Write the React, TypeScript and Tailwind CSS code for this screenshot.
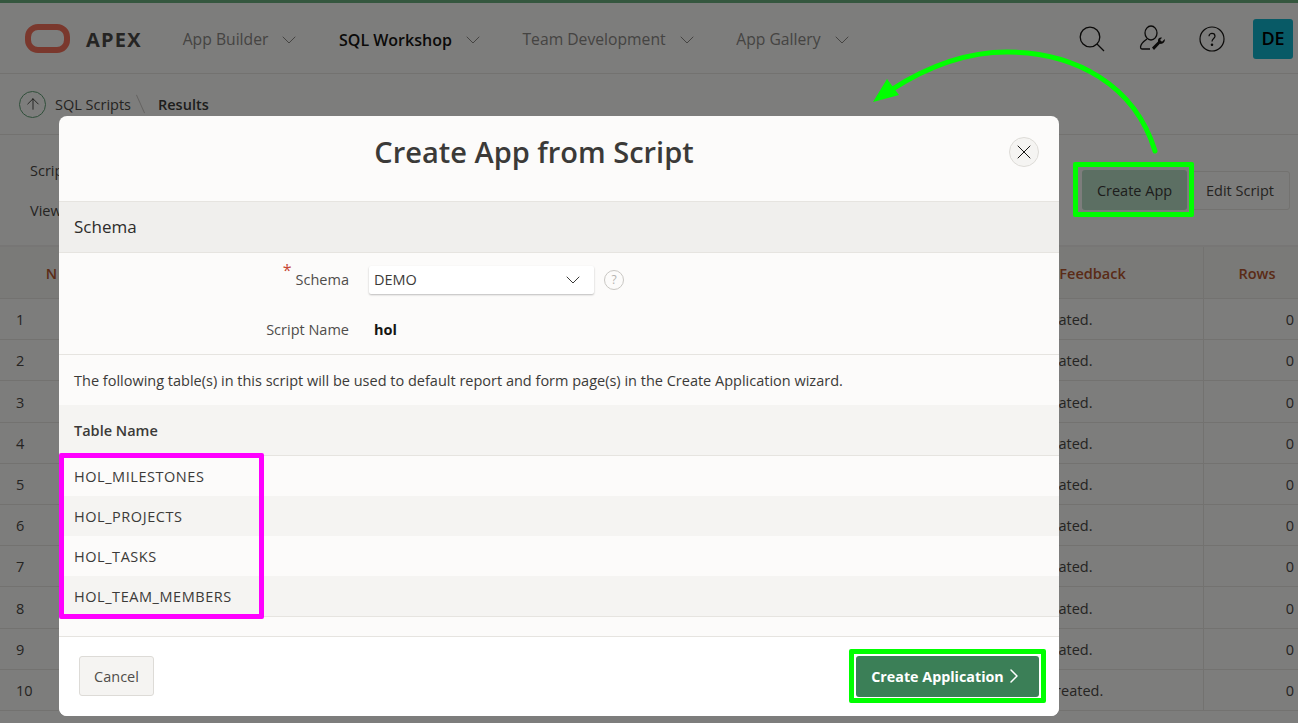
import React from "react";
import { ChevronDown, ChevronRight, X, ArrowUp } from "lucide-react";

const navItems = [
  { label: "App Builder", active: false },
  { label: "SQL Workshop", active: true },
  { label: "Team Development", active: false },
  { label: "App Gallery", active: false },
];

const scriptRows = [1, 2, 3, 4, 5, 6, 7, 8, 9, 10];
const tableNames = ["HOL_MILESTONES", "HOL_PROJECTS", "HOL_TASKS", "HOL_TEAM_MEMBERS"];

const UserWrench = () => (
  <svg width="27" height="27" viewBox="0 0 27 27" fill="none" stroke="currentColor" strokeWidth="1.3">
    <ellipse cx="12" cy="8" rx="6" ry="7" />
    <path d="M8 14 C5 16 2 18 1.5 22 Q1.500 24 3 24 H11" />
    <path d="M13 22.500 L19 16.500 C18.500 13.500 21 12 23 12.800 L21 15 L23 16.800 L25.800 14 C26.300 17 23.500 19.500 20.800 18.800 L15 25 Z" fill="currentColor" stroke="none" />
  </svg>
);

const App = () => {
  return (
    <div className="relative h-[723px] w-[1298px] overflow-hidden bg-[#fbfaf8] font-['Open_Sans',sans-serif] text-[14.5px] text-[#3b3a38]">
      {/* page behind the dialog */}
      <div className="h-[3px] bg-[#6aae7e]" />
      <header className="flex h-[71px] items-center border-b border-[#e6e4e0] pl-[25px] pr-[5px] pt-[1px]">
        <div className="h-[29px] w-[45px] rounded-[13px] border-[6px] border-[#f5705a]" />
        <span className="ml-[16px] pt-[2px] text-[20px] font-bold tracking-[1.2px] text-[#4a4946]">APEX</span>
        <nav className="ml-[41px] flex items-center gap-[37.6px] pt-[2px] text-[15.7px]">
          {navItems.map((item) => (
            <div key={item.label} className="flex items-center gap-[9px]">
              <span className={item.active ? "text-[16px] font-semibold text-[#161513]" : "text-[#8a8885]"}>{item.label}</span>
              <ChevronDown size={24} strokeWidth={1} className="text-[#8a8885]" />
            </div>
          ))}
        </nav>
        <div className="ml-auto flex items-center text-[#161513]">
          <svg width="26" height="26" viewBox="0 0 26 26" fill="none" stroke="currentColor" strokeWidth="1.3">
            <circle cx="11" cy="11" r="9.800" />
            <path d="M18 18 L25 25" />
          </svg>
          <span className="ml-[34px]"><UserWrench /></span>
          <svg className="ml-[33px]" width="26" height="26" viewBox="0 0 26 26" fill="none" stroke="currentColor" strokeWidth="1.2">
            <circle cx="13" cy="13" r="12" />
            <path d="M10 10.200 C10 6.500 16 6.500 16 10.200 C16 12.500 13 12.500 13 15.500" />
            <circle cx="13" cy="18.800" r="0.7" fill="currentColor" />
          </svg>
          <div className="ml-[28px] flex h-[40px] w-[40px] items-center justify-center rounded-[3px] bg-[#11b4cc] text-[18px] font-semibold text-black">DE</div>
        </div>
      </header>
      <div className="flex h-[61px] items-center border-b border-[#e6e4e0] pl-[19px]">
        <div className="flex h-[27px] w-[27px] items-center justify-center rounded-full border border-[#5f9e75]">
          <ArrowUp size={18} strokeWidth={1} className="text-[#161513]" />
        </div>
        <span className="ml-[9px] pt-[2px] text-[#4a4845]">SQL Scripts</span>
        <span className="ml-[9px] h-[20px] w-px rotate-[-24deg] bg-[#c8c6c2]" />
        <span className="ml-[17px] pt-[2px] font-semibold text-[#3b3a38]">Results</span>
      </div>
      <div className="flex h-[112px] justify-between border-b-2 border-[#eeedea] pl-[30px] pr-[8px] pt-[25px]">
        <div className="flex flex-col gap-[18px] text-[#4a4845]">
          <span>Script</span>
          <span>View</span>
        </div>
        <div className="mt-[10px] flex h-[40px] items-center">
          <button className="flex h-[40px] w-[105px] items-center justify-center rounded-[3px] bg-[#b8dec6] pt-[2px] text-[#3b3a38]">Create App</button>
          <button className="ml-[3px] flex h-[39px] w-[100px] items-center justify-center rounded-[3px] border border-[#e6e4e0] pt-[2px] text-[#4a4845]">Edit Script</button>
        </div>
      </div>
      <div className="grid grid-cols-[82px_93px_807px_222px_94px]">
        <div className="flex h-[52px] items-center justify-center border-b border-r border-[#e6e4e0] bg-[#f5f4f1] pl-[22px] pt-[2px] font-semibold text-[#b5562f]">N</div>
        <div className="border-b border-r border-[#e6e4e0] bg-[#f5f4f1]" />
        <div className="border-b border-r border-[#e6e4e0] bg-[#f5f4f1]" />
        <div className="flex items-center justify-center border-b border-r border-[#e6e4e0] bg-[#f5f4f1] pt-[2px] font-semibold text-[#b5562f]">Feedback</div>
        <div className="flex items-center justify-center border-b border-[#e6e4e0] bg-[#f5f4f1] pl-[12px] pt-[2px] font-semibold text-[#b5562f]">Rows</div>
        {scriptRows.map((row) => (
          <React.Fragment key={row}>
            <div className="flex h-[41.2px] items-center border-b border-r border-[#e6e4e0] pl-[16px] pt-[2px] text-[#4a4845]">{row}</div>
            <div className="border-b border-r border-[#e6e4e0]" />
            <div className="border-b border-r border-[#e6e4e0]" />
            <div className="flex items-center border-b border-r border-[#e6e4e0] pl-[15px] pt-[2px] text-[#4a4845]">{row === 10 ? "Trigger created." : "Table created."}</div>
            <div className="flex items-center justify-end border-b border-[#e6e4e0] pr-[4px] pt-[2px] text-[#4a4845]">0</div>
          </React.Fragment>
        ))}
      </div>

      {/* modal overlay */}
      <div className="absolute inset-0 bg-black/50" />

      {/* dialog */}
      <div className="absolute left-[59px] top-[116px] flex h-[600px] w-[1000px] flex-col overflow-hidden rounded-[8px] bg-[#fcfbfa]">
        <div className="flex h-[86px] flex-none items-center border-b border-[#e6e4e0] pl-[15px] pr-[20px]">
          <h1 className="flex-1 pb-[14px] pr-[15px] text-center text-[29px] font-semibold text-[#3b3a38]">Create App from Script</h1>
          <div className="mb-[14px] flex h-[30px] w-[30px] items-center justify-center rounded-full border border-[#dddbd7] bg-[#f5f4f2]">
            <X size={24} strokeWidth={1} className="text-[#161513]" />
          </div>
        </div>
        <div className="flex h-[51px] flex-none items-center border-b border-[#e6e4e0] bg-[#f0efed] pl-[15px] text-[17px] text-[#2d2c2a]">Schema</div>
        <div className="flex h-[102px] flex-none flex-col border-b border-[#e6e4e0]">
          <div className="flex h-[53px] items-center">
            <div className="flex w-[290px] justify-end text-[#4f4d4a]">
              <span className="mr-[4px] mt-[-7px] text-[16px] leading-[16px] text-[#c74634]">*</span>
              <span>Schema</span>
            </div>
            <div className="ml-[20px] flex h-[28px] w-[225px] items-center justify-between rounded-[2px] bg-white pl-[5px] pr-[9px] text-[#3b3a38] shadow-[0_1px_2px_rgba(0,0,0,0.25)]">
              <span>DEMO</span>
              <ChevronDown size={24} strokeWidth={1} className="text-[#3b3a38]" />
            </div>
            <div className="ml-[10px] flex h-[20px] w-[20px] items-center justify-center rounded-full border border-[#c9c7c3] text-[12px] text-[#b5b3af]">?</div>
          </div>
          <div className="flex h-[47px] items-center">
            <div className="w-[290px] text-right text-[#4f4d4a]">Script Name</div>
            <div className="ml-[25px] font-bold text-[#161513]">hol</div>
          </div>
        </div>
        <div className="flex h-[50px] flex-none items-center pl-[15px] pt-[2px] text-[#3b3a38]">
          The following table(s) in this script will be used to default report and form page(s) in the Create Application wizard.
        </div>
        <div className="flex h-[51px] flex-none items-center border-b border-[#e6e4e0] bg-[#f5f4f2] pl-[15px] pt-[2px] font-semibold text-[#3b3a38]">Table Name</div>
        <div className="flex-none border-b border-[#e6e4e0]">
          {tableNames.map((name, i) => (
            <div key={name} className={`flex h-[40px] items-center pl-[15px] pt-[2px] tracking-[0.55px] text-[#3b3a38] ${i % 2 === 1 ? "bg-[#f5f4f2]" : ""}`}>{name}</div>
          ))}
        </div>
        <div className="h-[20px] flex-none border-b border-[#e6e4e0]" />
        <div className="flex flex-1 items-center justify-between bg-white pb-[1px] pl-[20px] pr-[20px]">
          <button className="flex h-[40px] w-[75px] items-center justify-center rounded-[3px] border border-[#dddbd7] bg-[#f5f4f2] pt-[2px] text-[#4f4d4a]">Cancel</button>
          <button className="flex h-[41px] w-[183px] items-center justify-center rounded-[3px] bg-[#3b7f57] pl-[2px] text-[14.3px] font-bold text-white">
            <span className="pt-[2px]">Create Application</span>
            <ChevronRight size={24} strokeWidth={1.5} className="-ml-[2px]" />
          </button>
        </div>
      </div>

      {/* screenshot annotations */}
      <div className="absolute left-[1073px] top-[162px] h-[55px] w-[121px] rounded-[2px] border-[5px] border-[#00ff00]" />
      <div className="absolute left-[849px] top-[649px] h-[54px] w-[197px] rounded-[2px] border-[5px] border-[#00ff00]" />
      <div className="absolute left-[59px] top-[453px] h-[166px] w-[205px] rounded-[2px] border-[5px] border-[#ff00ff]" />
      <svg className="absolute left-[860px] top-[40px]" width="310" height="125" viewBox="860 40 310 125" fill="none">
        <path d="M1155 151 C1135 85 1075 52 1007 52 C965 52 925 68 891 90" stroke="#00ff00" strokeWidth="5" strokeLinecap="round" />
        <path d="M873 102 L887 79 L899 95 Z" fill="#00ff00" />
      </svg>
    </div>
  );
};

export default App;
